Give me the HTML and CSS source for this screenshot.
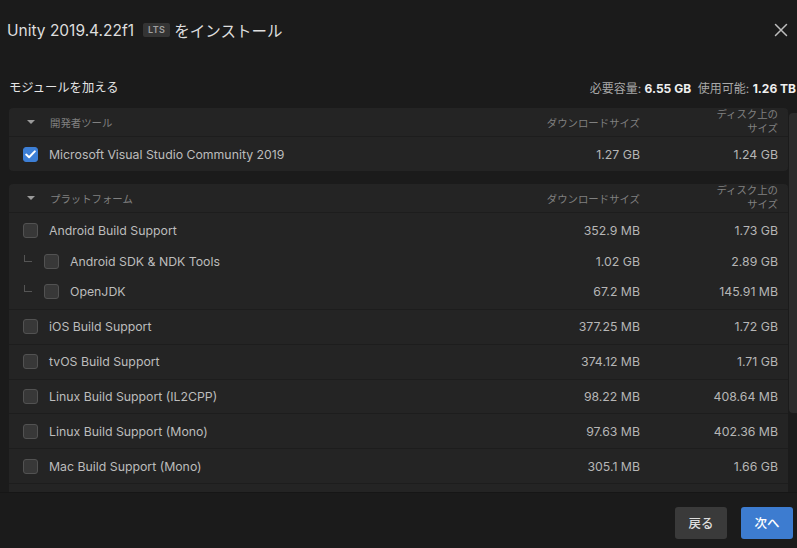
FILE: index.html
```html
<!DOCTYPE html>
<html lang="ja">
<head>
<meta charset="utf-8">
<title>Unity をインストール</title>
<link rel="stylesheet" href="styles.css">
</head>
<body>
<div class="dialog">
  <header class="titlebar">
    <h1 class="title"><span>Unity 2019.4.22f1</span><span class="badge">LTS</span><span>をインストール</span></h1>
    <button class="close" aria-label="閉じる">
      <svg width="14" height="14" viewBox="0 0 14 14"><path d="M1.5 1.5 L12.5 12.5 M12.5 1.5 L1.5 12.5" stroke="#bdbdbd" stroke-width="1.5" fill="none" stroke-linecap="round"/></svg>
    </button>
  </header>

  <div class="subhead">
    <span class="subtitle">モジュールを加える</span>
    <span class="stats">必要容量: <b>6.55 GB</b>&nbsp;&nbsp;使用可能: <b>1.26 TB</b></span>
  </div>

  <div class="scroller">
    <div class="content">
      <section class="section">
        <div class="grid sec-head">
          <div class="sec-name"><span class="tri"></span>開発者ツール</div>
          <div class="num">ダウンロードサイズ</div>
          <div class="num two">ディスク上の<br>サイズ</div>
        </div>
        <div class="grid row first">
          <div class="name"><span class="cb checked"><svg width="11" height="9" viewBox="0 0 11 9"><path d="M1.2 4.6 L4.1 7.3 L9.8 1.4" stroke="#fff" stroke-width="2" fill="none" stroke-linecap="round" stroke-linejoin="round"/></svg></span>Microsoft Visual Studio Community 2019</div>
          <div class="num">1.27 GB</div>
          <div class="num">1.24 GB</div>
        </div>
      </section>

      <section class="section">
        <div class="grid sec-head">
          <div class="sec-name"><span class="tri"></span>プラットフォーム</div>
          <div class="num">ダウンロードサイズ</div>
          <div class="num two">ディスク上の<br>サイズ</div>
        </div>
        <div class="group">
          <div class="grid row">
            <div class="name"><span class="cb"></span>Android Build Support</div>
            <div class="num">352.9 MB</div>
            <div class="num">1.73 GB</div>
          </div>
          <div class="grid subrow">
            <div class="name sub"><span class="tree"></span><span class="cb"></span>Android SDK &amp; NDK Tools</div>
            <div class="num">1.02 GB</div>
            <div class="num">2.89 GB</div>
          </div>
          <div class="grid subrow">
            <div class="name sub"><span class="tree"></span><span class="cb"></span>OpenJDK</div>
            <div class="num">67.2 MB</div>
            <div class="num">145.91 MB</div>
          </div>
        </div>
        <div class="grid row">
          <div class="name"><span class="cb"></span>iOS Build Support</div>
          <div class="num">377.25 MB</div>
          <div class="num">1.72 GB</div>
        </div>
        <div class="grid row">
          <div class="name"><span class="cb"></span>tvOS Build Support</div>
          <div class="num">374.12 MB</div>
          <div class="num">1.71 GB</div>
        </div>
        <div class="grid row">
          <div class="name"><span class="cb"></span>Linux Build Support (IL2CPP)</div>
          <div class="num">98.22 MB</div>
          <div class="num">408.64 MB</div>
        </div>
        <div class="grid row">
          <div class="name"><span class="cb"></span>Linux Build Support (Mono)</div>
          <div class="num">97.63 MB</div>
          <div class="num">402.36 MB</div>
        </div>
        <div class="grid row">
          <div class="name"><span class="cb"></span>Mac Build Support (Mono)</div>
          <div class="num">305.1 MB</div>
          <div class="num">1.66 GB</div>
        </div>
        <div class="row empty"></div>
      </section>
    </div>
    <div class="scrollbar"><div class="thumb"></div></div>
  </div>

  <footer class="footer">
    <button class="btn back">戻る</button>
    <button class="btn next">次へ</button>
  </footer>
</div>
</body>
</html>
```

FILE: styles.css
```css
* { box-sizing: border-box; }

html, body {
  margin: 0;
  padding: 0;
  background: #1b1b1b;
}

body {
  font-family: Inter, "Noto Sans CJK JP", sans-serif;
  color: #c0c0c0;
  width: 797px;
  height: 548px;
  overflow: hidden;
}

.dialog {
  display: flex;
  flex-direction: column;
  height: 548px;
}

.titlebar {
  height: 60px;
  display: flex;
  align-items: center;
  justify-content: space-between;
  padding: 0 8px 0 7px;
}

.title {
  margin: 0;
  font-size: 15.5px;
  font-weight: 400;
  color: #dedede;
  display: flex;
  align-items: center;
  white-space: nowrap;
}

.badge {
  display: inline-block;
  font-size: 9px;
  font-weight: 600;
  letter-spacing: 0.4px;
  color: #a0a0a0;
  background: #343434;
  border-radius: 2px;
  padding: 0 5px;
  height: 14px;
  line-height: 14px;
  margin: 0 4px 0 9px;
}

.close {
  background: none;
  border: 0;
  padding: 0;
  width: 16px;
  height: 16px;
  display: flex;
  align-items: center;
  justify-content: center;
}

.subhead {
  margin-top: 17px;
  height: 20px;
  display: flex;
  align-items: center;
  justify-content: space-between;
  padding: 0 1px 0 9px;
}

.subtitle {
  font-size: 12.3px;
  color: #e4e4e4;
}

.stats {
  font-size: 12px;
  color: #a8a8a8;
  white-space: nowrap;
}

.stats b {
  color: #f0f0f0;
  font-weight: 700;
}

.scroller {
  margin-top: 11px;
  height: 385px;
  overflow: hidden;
  display: flex;
  padding-left: 9px;
  border-bottom: 1px solid #161616;
}

.content {
  width: 779px;
  flex: none;
}

.scrollbar {
  flex: none;
  width: 9px;
  margin-left: 1px;
  padding-top: 5px;
}

.thumb {
  width: 8px;
  height: 300px;
  background: #2c2c2c;
  border-radius: 4px 0 0 4px;
}

.section {
  background: #242424;
  border-radius: 4px;
  margin-bottom: 13px;
}

.grid {
  display: grid;
  grid-template-columns: 1fr 120px 70px;
  column-gap: 68px;
  padding-right: 10px;
  align-items: center;
}

.sec-head {
  height: 29px;
  border-bottom: 1px solid #1d1d1d;
  font-size: 10.4px;
  color: #808080;
}

.sec-name {
  display: flex;
  align-items: center;
  padding-left: 18px;
}

.tri {
  width: 0;
  height: 0;
  border-left: 4px solid transparent;
  border-right: 4px solid transparent;
  border-top: 4px solid #9a9a9a;
  margin-right: 15px;
}

.num {
  text-align: right;
  white-space: nowrap;
}

.two {
  line-height: 14px;
}

.row {
  height: 34.8px;
  border-bottom: 1px solid #1d1d1d;
  font-size: 12.3px;
  color: #bcbcbc;
}

.row.first { height: 34px; }

.row:last-child { border-bottom: 0; }

.row .num, .subrow .num { color: #b6b6b6; }

.group {
  border-bottom: 1px solid #1d1d1d;
  padding-bottom: 3px;
}

.group .row {
  border-bottom: 0;
  height: 34px;
}

.subrow {
  height: 29.5px;
  font-size: 12.3px;
  color: #bcbcbc;
}

.name {
  display: flex;
  align-items: center;
  padding-left: 14px;
  white-space: nowrap;
}

.name.sub {
  padding-left: 15px;
}

.tree {
  width: 8px;
  height: 7px;
  border-left: 1px solid #555;
  border-bottom: 1px solid #555;
  margin-right: 12px;
  margin-top: -6px;
}

.cb {
  flex: none;
  width: 15px;
  height: 15px;
  border-radius: 3px;
  background: #383838;
  border: 1px solid #525252;
  margin-right: 11px;
  display: flex;
  align-items: center;
  justify-content: center;
}

.cb.checked {
  background: #3d7fd6;
  border-color: #3d7fd6;
}

.footer {
  flex: 1;
  display: flex;
  justify-content: flex-end;
  align-items: center;
  gap: 14px;
  padding: 0 4px 0 0;
}

.btn {
  font-family: Inter, "Noto Sans CJK JP", sans-serif;
  font-size: 12.5px;
  font-weight: 500;
  height: 32px;
  width: 52px;
  border-radius: 3px;
  border: 0;
  margin-top: 4px;
}

.back {
  background: #3a3a3a;
  color: #dcdcdc;
}

.next {
  background: #3d7cd0;
  color: #ffffff;
}
```
